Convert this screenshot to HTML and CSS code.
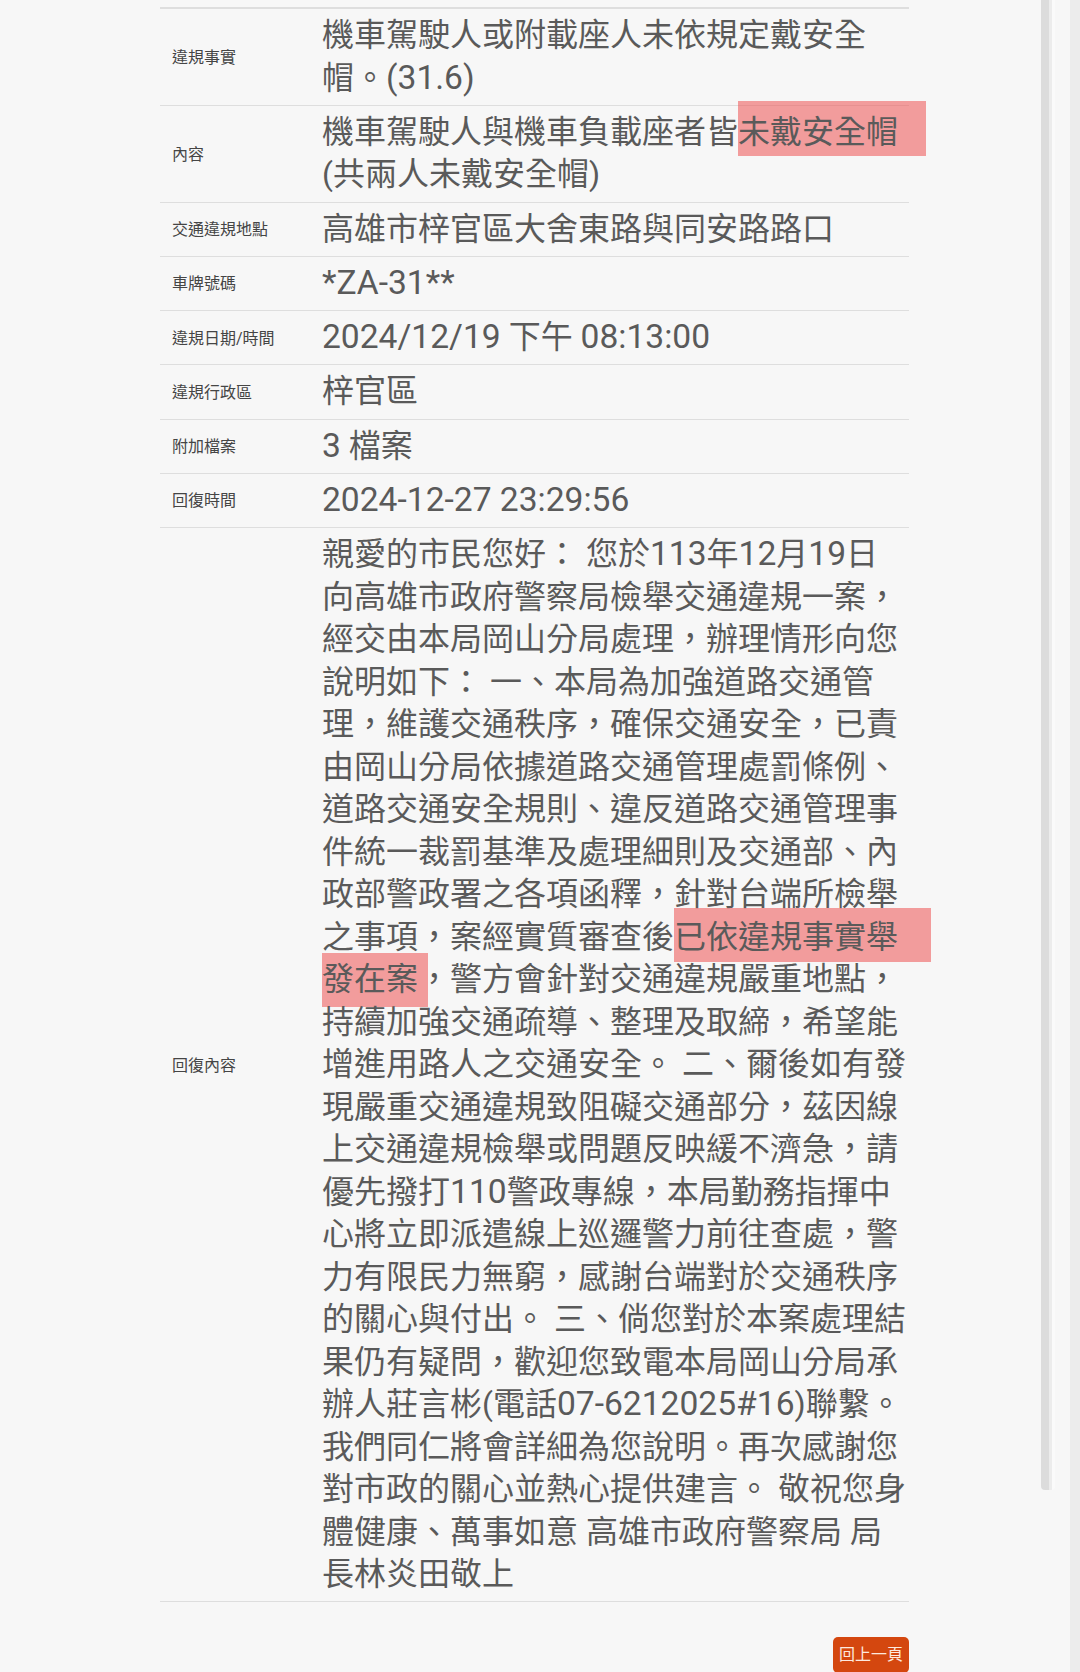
FILE: index.html
```html
<!DOCTYPE html>
<html lang="zh-Hant">
<head>
    <meta charset="UTF-8">
    <meta name="viewport" content="width=device-width, initial-scale=1.0">
    <title>檢舉案件查詢 - 回復內容</title>
    <link rel="stylesheet" href="styles.css">
</head>
<body>
    <div class="page">
        <main class="content">
            <table class="case-table">
                <tr>
                    <th>違規事實</th>
                    <td>機車駕駛人或附載座人未依規定戴安全帽。<span class="num">(31.6)</span></td>
                </tr>
                <tr>
                    <th>內容</th>
                    <td>機車駕駛人與機車負載座者皆<span class="mark mark-top">未戴安全帽</span>(共兩人未戴安全帽)</td>
                </tr>
                <tr>
                    <th>交通違規地點</th>
                    <td>高雄市梓官區大舍東路與同安路路口</td>
                </tr>
                <tr>
                    <th>車牌號碼</th>
                    <td><span class="num">*ZA-31**</span></td>
                </tr>
                <tr>
                    <th>違規日期/時間</th>
                    <td><span class="num">2024/12/19</span> 下午 <span class="num">08:13:00</span></td>
                </tr>
                <tr>
                    <th>違規行政區</th>
                    <td>梓官區</td>
                </tr>
                <tr>
                    <th>附加檔案</th>
                    <td><span class="num">3</span> 檔案</td>
                </tr>
                <tr>
                    <th>回復時間</th>
                    <td><span class="num">2024-12-27 23:29:56</span></td>
                </tr>
                <tr>
                    <th>回復內容</th>
                    <td>親愛的市民您好： 您於<span class="num">113</span>年<span class="num">12</span>月<span class="num">19</span>日向高雄市政府警察局檢舉交通違規一案，經交由本局岡山分局處理，辦理情形向您說明如下： 一、本局為加強道路交通管理，維護交通秩序，確保交通安全，已責由岡山分局依據道路交通管理處罰條例、道路交通安全規則、違反道路交通管理事件統一裁罰基準及處理細則及交通部、內政部警政署之各項函釋，針對台端所檢舉之事項，案經實質審查後<span class="mark mark-wide">已依違規事實舉</span><span class="mark mark-short">發在案</span>，警方會針對交通違規嚴重地點，持續加強交通疏導、整理及取締，希望能增進用路人之交通安全。 二、爾後如有發現嚴重交通違規致阻礙交通部分，茲因線上交通違規檢舉或問題反映緩不濟急，請優先撥打<span class="num">110</span>警政專線，本局勤務指揮中心將立即派遣線上巡邏警力前往查處，警力有限民力無窮，感謝台端對於交通秩序的關心與付出。 三、倘您對於本案處理結果仍有疑問，歡迎您致電本局岡山分局承辦人莊言彬(電話<span class="num">07-6212025#16</span>)聯繫。我們同仁將會詳細為您說明。再次感謝您對市政的關心並熱心提供建言。 敬祝您身體健康、萬事如意 高雄市政府警察局 局長林炎田敬上</td>
                </tr>
            </table>

            <div class="actions">
                <a href="#" class="btn-back">回上一頁</a>
            </div>
        </main>

        <div class="scrollbar"><div class="thumb"></div></div>
        <div class="edge"></div>
    </div>
</body>
</html>
```

FILE: styles.css
```css
:root {
    --bg: #f7f7f7;
    --line: #dedede;
    --text: #5a5a5a;
    --label: #454545;
    --mark: rgba(238, 82, 82, 0.55);
    --orange: #d4470f;
}

html, body {
    margin: 0;
    height: 100%;
    overflow: hidden;
}

body {
    background-color: var(--bg);
    font-family: Roboto, "Noto Sans CJK TC", sans-serif;
    color: var(--text);
}

.page {
    display: flex;
    height: 1672px;
}

.content {
    width: 1041px;
    padding-left: 160px;
    padding-top: 7px;
    box-sizing: border-box;
}

.case-table {
    width: 749px;
    border-collapse: separate;
    border-spacing: 0;
    border-top: 2px solid var(--line);
}

.case-table th,
.case-table td {
    border-bottom: 1px solid var(--line);
    vertical-align: middle;
}

.case-table th {
    width: 152px;
    padding: 4px 0 6px 12px;
    box-sizing: border-box;
    text-align: left;
    font-weight: normal;
    font-size: 16px;
    color: var(--label);
    white-space: nowrap;
}

.case-table td {
    padding: 5px 1px 5.75px 10px;
    font-size: 32px;
    line-height: 42.5px;
    text-spacing-trim: space-all;
}

/* latin runs render a bit larger than the CJK text in the original */
.num {
    font-size: 1.05em;
    line-height: 1;
}

.mark {
    background: var(--mark);
    padding: 7px 0 9px;
}

.mark-top {
    padding: 12px 0 5px;
    box-shadow: 28px 0 0 var(--mark);
}

.mark-wide {
    padding: 10px 0 6px;
    box-shadow: 33px 0 0 var(--mark);
}

.mark-short {
    box-shadow: 10px 0 0 var(--mark);
}

.actions {
    display: flex;
    justify-content: flex-end;
    width: 749px;
    margin-top: 35px;
}

.btn-back {
    display: inline-block;
    padding: 6px 6px;
    background: var(--orange);
    color: #fde9de;
    font-size: 16px;
    line-height: 24px;
    text-decoration: none;
    border-radius: 5px;
}

.scrollbar {
    width: 14px;
    display: flex;
    flex-direction: column;
}

.scrollbar .thumb {
    height: 1490px;
    background: linear-gradient(to right, #dcdcdc 0, #dcdcdc 8px, #ececec 8px, #ececec 11px, #fafafa 11px);
    border-radius: 0 0 4px 4px;
}

.edge {
    margin-left: auto;
    width: 10px;
    background: #ececec;
}
```
